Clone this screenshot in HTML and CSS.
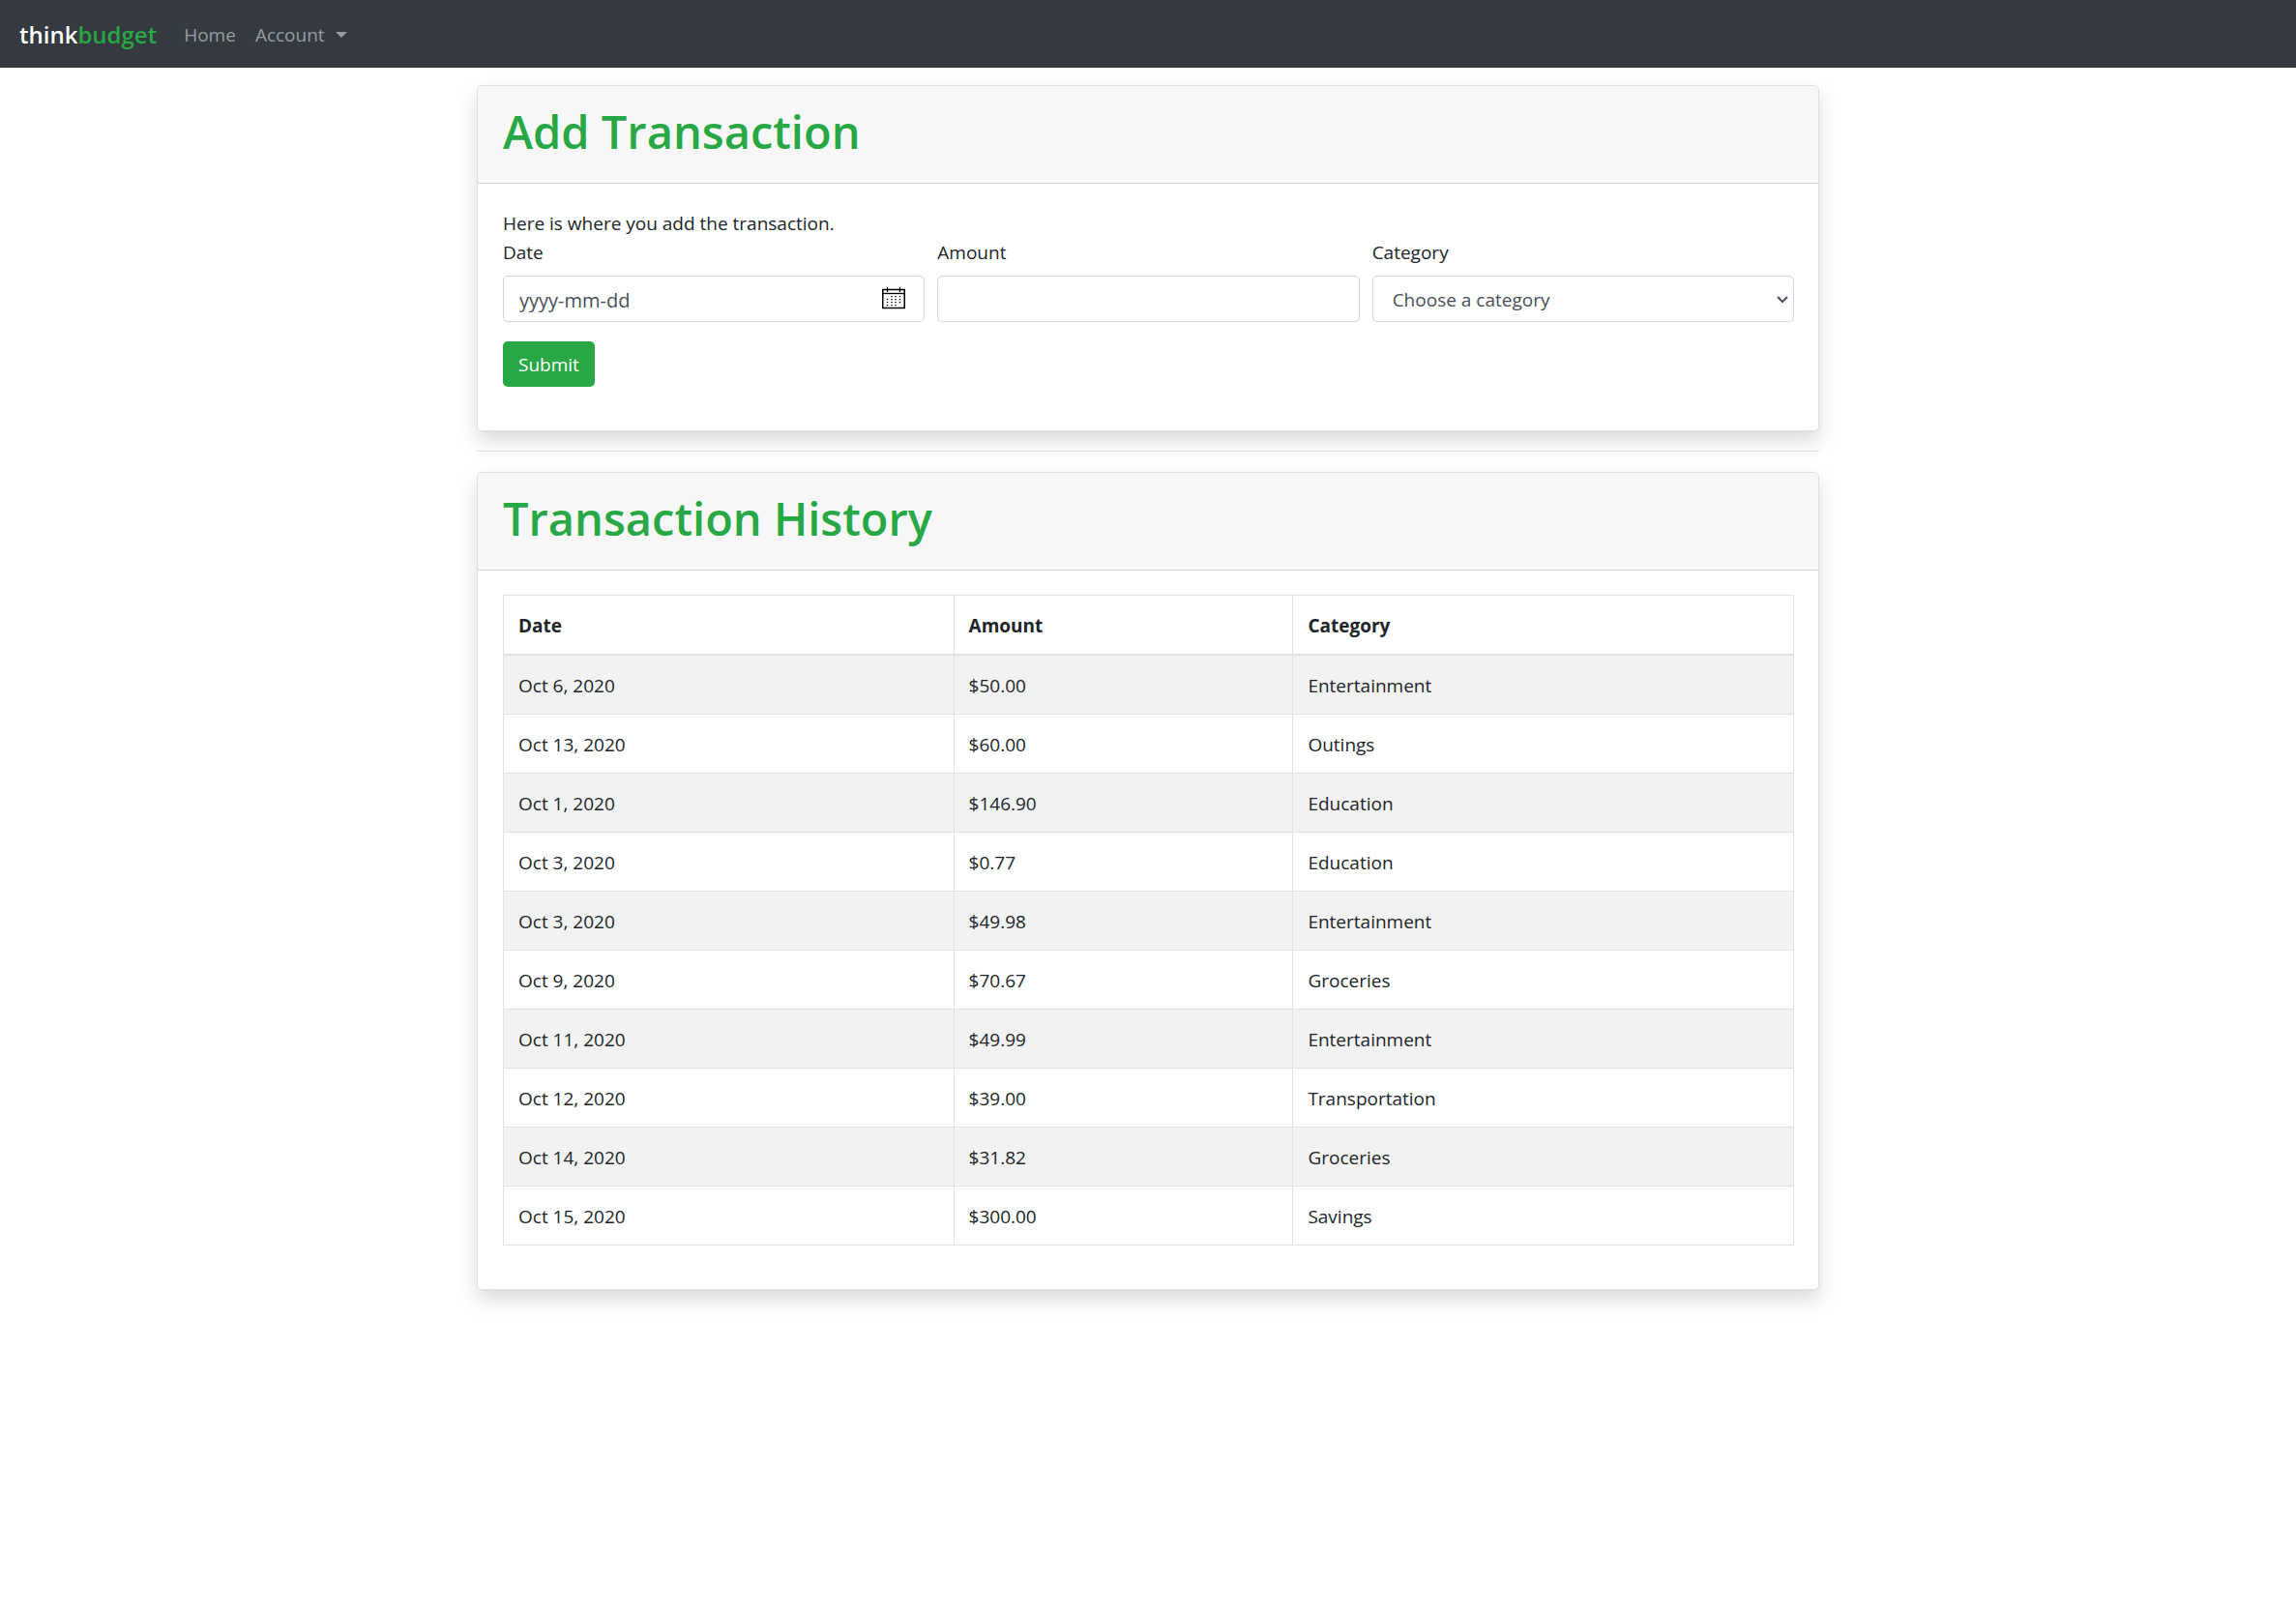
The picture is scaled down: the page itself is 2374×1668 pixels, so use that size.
FILE: index.html
```html
<!DOCTYPE html>
<html lang="en">
<head>
<meta charset="utf-8">
<meta name="viewport" content="width=device-width, initial-scale=1">
<title>thinkbudget</title>
<link rel="stylesheet" href="styles.css">
</head>
<body>
<nav class="navbar">
  <a class="brand" href="#">think<span class="brand-accent">budget</span></a>
  <a class="nav-link" href="#">Home</a>
  <a class="nav-link dropdown" href="#">Account</a>
</nav>
<main class="container">
  <section class="card">
    <header class="card-header"><h1>Add Transaction</h1></header>
    <div class="card-body">
      <p class="intro">Here is where you add the transaction.</p>
      <form>
        <div class="form-row">
          <div class="field">
            <label for="date">Date</label>
            <div class="control">
              <input class="input input-date" id="date" type="text" placeholder="yyyy-mm-dd">
              <button class="picker" type="button" aria-label="Open calendar">
                <svg width="24" height="23" viewBox="0 0 24 23" fill="none" stroke="#000">
                  <path d="M.75 2.500H23.250V21.500H.75Z" stroke-width="1.500"/>
                  <path d="M1 6.500H23" stroke-width="1.300"/>
                  <path d="M5.500 0V5M18.500 0V5" stroke-width="1.300"/>
                  <path d="M10 9V19.500M14 9V19.500M18.500 9V17M5.500 12V19.500" stroke-width="1.400" stroke-dasharray="1.200 1.800"/>
                </svg>
              </button>
            </div>
          </div>
          <div class="field">
            <label for="amount">Amount</label>
            <input class="input" id="amount" type="text">
          </div>
          <div class="field">
            <label for="category">Category</label>
            <div class="control">
              <select class="input select" id="category"><option>Choose a category</option></select>
              <svg class="chevron" width="12" height="8" viewBox="0 0 12 8" fill="none" stroke="#495057" stroke-width="2"><path d="M1 1L6 6L11 1"/></svg>
            </div>
          </div>
        </div>
        <button class="submit" type="submit">Submit</button>
      </form>
    </div>
  </section>
  <hr class="divider">
  <section class="card">
    <header class="card-header"><h1>Transaction History</h1></header>
    <div class="card-body">
      <table class="table">
        <colgroup><col class="col-date"><col class="col-amount"><col></colgroup>
        <thead><tr><th>Date</th><th>Amount</th><th>Category</th></tr></thead>
        <tbody>
          <tr><td>Oct 6, 2020</td><td>$50.00</td><td>Entertainment</td></tr>
          <tr><td>Oct 13, 2020</td><td>$60.00</td><td>Outings</td></tr>
          <tr><td>Oct 1, 2020</td><td>$146.90</td><td>Education</td></tr>
          <tr><td>Oct 3, 2020</td><td>$0.77</td><td>Education</td></tr>
          <tr><td>Oct 3, 2020</td><td>$49.98</td><td>Entertainment</td></tr>
          <tr><td>Oct 9, 2020</td><td>$70.67</td><td>Groceries</td></tr>
          <tr><td>Oct 11, 2020</td><td>$49.99</td><td>Entertainment</td></tr>
          <tr><td>Oct 12, 2020</td><td>$39.00</td><td>Transportation</td></tr>
          <tr><td>Oct 14, 2020</td><td>$31.82</td><td>Groceries</td></tr>
          <tr><td>Oct 15, 2020</td><td>$300.00</td><td>Savings</td></tr>
        </tbody>
      </table>
    </div>
  </section>
</main>
</body>
</html>
```
FILE: styles.css
```css
*, *::before, *::after { box-sizing: border-box; }

body {
  margin: 0;
  min-height: 100vh;
  font-family: "Open Sans", "Noto Sans", sans-serif;
  font-size: 19px;
  line-height: 30px;
  color: #212529;
  background: #fff;
}

.navbar {
  display: flex;
  align-items: center;
  gap: 20px;
  height: 70px;
  padding: 2px 20px 0;
  background: #343a40;
}
.brand {
  margin-right: 8px;
  font-size: 24px;
  font-weight: 600;
  line-height: 38px;
  color: #fff;
  text-decoration: none;
}
.brand-accent { color: #28a745; }
.nav-link { color: #999c9f; text-decoration: none; }
.dropdown { display: flex; align-items: center; gap: 11px; }
.dropdown::after {
  content: "";
  border: 6px solid transparent;
  border-top-color: currentColor;
  border-bottom: 0;
}

.container {
  max-width: 1426px;
  margin: 0 auto;
  padding: 18px 19px 48px;
}
.card {
  border: 1px solid #dfdfdf;
  border-radius: 5px;
  background: #fff;
  box-shadow: 0 10px 20px rgba(0, 0, 0, 0.15);
}
.card-header {
  padding: 17px 25px 23px 26px;
  border-bottom: 1px solid #d8d8d8;
  border-radius: 4px 4px 0 0;
  background: #f7f7f7;
}
h1 {
  margin: 0;
  font-size: 47px;
  font-weight: 600;
  line-height: 60px;
  color: #28a745;
}
.card-body { padding: 25px 25px 45px 26px; }
.intro { margin: 0; padding-top: 1px; }
.form-row {
  display: grid;
  grid-template-columns: repeat(3, 1fr);
  gap: 13px;
  margin-bottom: 20px;
}
.field label { display: block; margin-bottom: 9px; }
.control { position: relative; }
.input {
  display: block;
  width: 100%;
  height: 48px;
  padding: 2px 16px 0;
  border: 1px solid #ced4da;
  border-radius: 5px;
  background: #fff;
  font: inherit;
  color: #495057;
}
.input-date { font-size: 20px; }
.input::placeholder { color: #495057; opacity: 1; }
.select { appearance: none; padding: 2px 20px 0; }
.picker {
  position: absolute;
  top: 12px;
  right: 20px;
  padding: 0;
  border: 0;
  background: none;
}
.picker svg { display: block; }
.chevron {
  position: absolute;
  top: 21px;
  right: 6px;
  pointer-events: none;
}
.submit {
  display: block;
  height: 47px;
  padding: 0 16px;
  border: 0;
  border-radius: 5px;
  background: #28a745;
  font: inherit;
  color: #fff;
}

.divider {
  margin: 20px 0 21px;
  border: 0;
  border-top: 1px solid #dfdfdf;
}

.table {
  width: 100%;
  table-layout: fixed;
  border-collapse: collapse;
}
.col-date { width: 34.9%; }
.col-amount { width: 26.3%; }
.table th, .table td {
  height: 61px;
  padding: 16px 15px 14px;
  border: 1px solid #dee2e6;
  text-align: left;
}
.table th { border-bottom-width: 2px; font-weight: 700; }
.table tbody tr:nth-child(odd) { background: #f2f2f2; }
```
